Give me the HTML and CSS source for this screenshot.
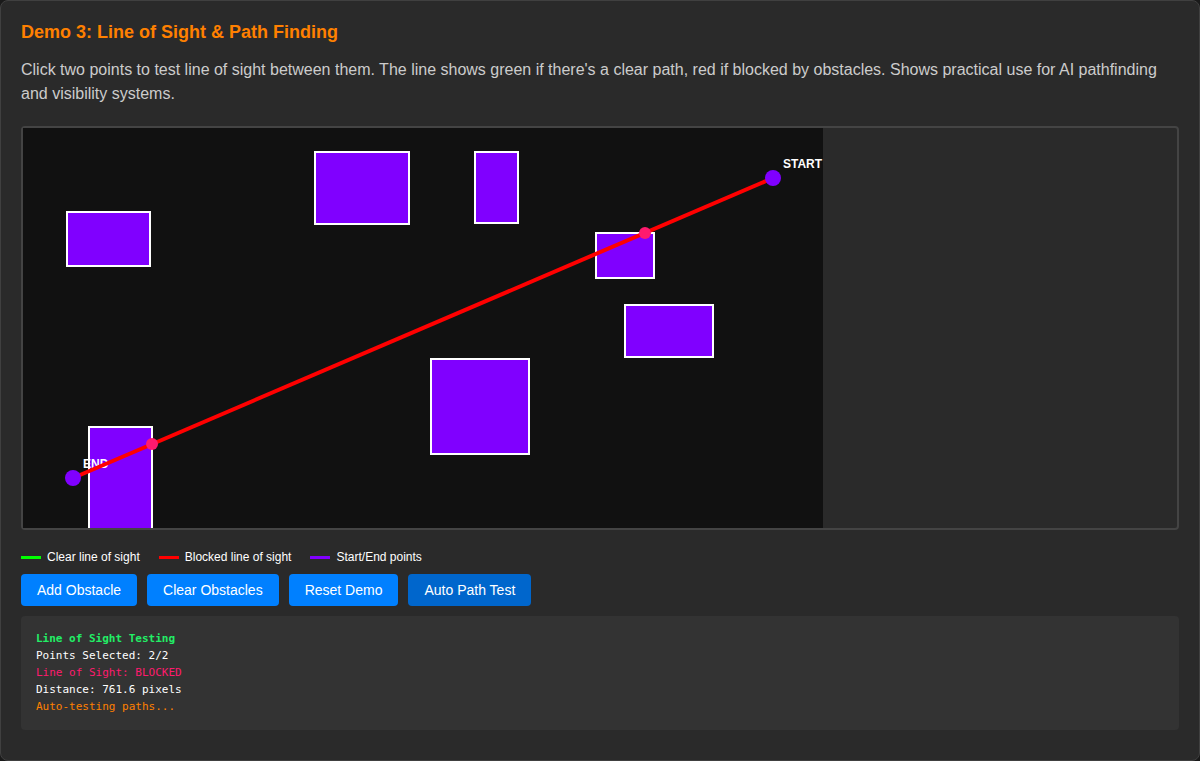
FILE: index.html
```html
<!DOCTYPE html>
<html>
<head>
<meta charset="utf-8">
<link rel="stylesheet" href="styles.css">
</head>
<body>
<div class="card">
  <h3 class="title">Demo 3: Line of Sight &amp; Path Finding</h3>
  <p class="desc">Click two points to test line of sight between them. The line shows green if there's a clear path, red if blocked by obstacles. Shows practical use for AI pathfinding and visibility systems.</p>
  <div class="stage">
    <svg class="canvas" width="800" height="400" viewBox="0 0 800 400">
      <rect x="0" y="0" width="800" height="400" fill="#111111"/>
      <g fill="#8000ff" stroke="#ffffff" stroke-width="2">
        <rect x="44" y="84" width="83" height="54"/>
        <rect x="292" y="24" width="94" height="72"/>
        <rect x="452" y="24" width="43" height="71"/>
        <rect x="573" y="105" width="58" height="45"/>
        <rect x="602" y="177" width="88" height="52"/>
        <rect x="408" y="231" width="98" height="95"/>
        <rect x="66" y="299" width="63" height="104"/>
      </g>
      <text x="760" y="40" class="lbl">START</text>
      <text x="60" y="340" class="lbl">END</text>
      <line x1="750" y1="50" x2="50" y2="350" stroke="#ff0000" stroke-width="4"/>
      <circle cx="622" cy="105" r="6" fill="#ff1a6e"/>
      <circle cx="129" cy="316" r="6" fill="#ff1a6e"/>
      <circle cx="750" cy="50" r="8" fill="#8000ff"/>
      <circle cx="50" cy="350" r="8" fill="#8000ff"/>
    </svg>
  </div>
  <div class="legend">
    <span class="item"><i class="swatch green"></i>Clear line of sight</span>
    <span class="item"><i class="swatch red"></i>Blocked line of sight</span>
    <span class="item"><i class="swatch purple"></i>Start/End points</span>
  </div>
  <div class="buttons">
    <button class="btn">Add Obstacle</button>
    <button class="btn">Clear Obstacles</button>
    <button class="btn">Reset Demo</button>
    <button class="btn active">Auto Path Test</button>
  </div>
  <div class="info">
    <div class="ok bold">Line of Sight Testing</div>
    <div>Points Selected: 2/2</div>
    <div class="bad">Line of Sight: BLOCKED</div>
    <div>Distance: 761.6 pixels</div>
    <div class="warn">Auto-testing paths...</div>
  </div>
</div>
</body>
</html>
```
FILE: styles.css
```css
html, body {
  margin: 0;
  padding: 0;
  background: #1a1a1a;
}
body {
  font-family: "Liberation Sans", Arial, sans-serif;
}
.card {
  box-sizing: border-box;
  width: 1200px;
  height: 761px;
  background: #2a2a2a;
  border: 1px solid #404040;
  border-radius: 8px;
  padding: 20px;
}
.title {
  margin: 0 0 15px;
  color: #ff8000;
  font-size: 18px;
  font-weight: bold;
  line-height: 22px;
}
.desc {
  margin: 0 0 20px;
  color: #cccccc;
  font-size: 16px;
  line-height: 24px;
}
.stage {
  border: 2px solid #444444;
  border-radius: 4px;
  background: #2a2a2a;
  height: 400px;
  display: flex;
}
.canvas {
  display: block;
}
.lbl {
  font-family: "Liberation Sans", Arial, sans-serif;
  font-size: 12px;
  font-weight: bold;
  fill: #ffffff;
}
.legend {
  display: flex;
  gap: 19px;
  margin-top: 19px;
  font-size: 12px;
  line-height: 16px;
  color: #ffffff;
}
.item {
  display: flex;
  align-items: center;
}
.swatch {
  display: inline-block;
  width: 20px;
  height: 3px;
  margin-right: 6px;
}
.green { background: #00ff00; }
.red { background: #ff0000; }
.purple { background: #8000ff; }
.buttons {
  display: flex;
  gap: 10px;
  margin-top: 9px;
}
.btn {
  font-family: "Liberation Sans", Arial, sans-serif;
  font-size: 14px;
  color: #ffffff;
  background: #0080ff;
  border: none;
  border-radius: 4px;
  padding: 0 16px;
  height: 32px;
  line-height: 32px;
}
.btn.active {
  background: #0066cc;
}
.info {
  margin-top: 10px;
  background: #333333;
  border-radius: 4px;
  padding: 14px 15px 15px;
  font-family: "DejaVu Sans Mono", monospace;
  font-size: 11px;
  line-height: 17px;
  color: #ffffff;
}
.bold { font-weight: bold; }
.ok { color: #22ee66; }
.bad { color: #ff1a6e; }
.warn { color: #ff8000; }
```
